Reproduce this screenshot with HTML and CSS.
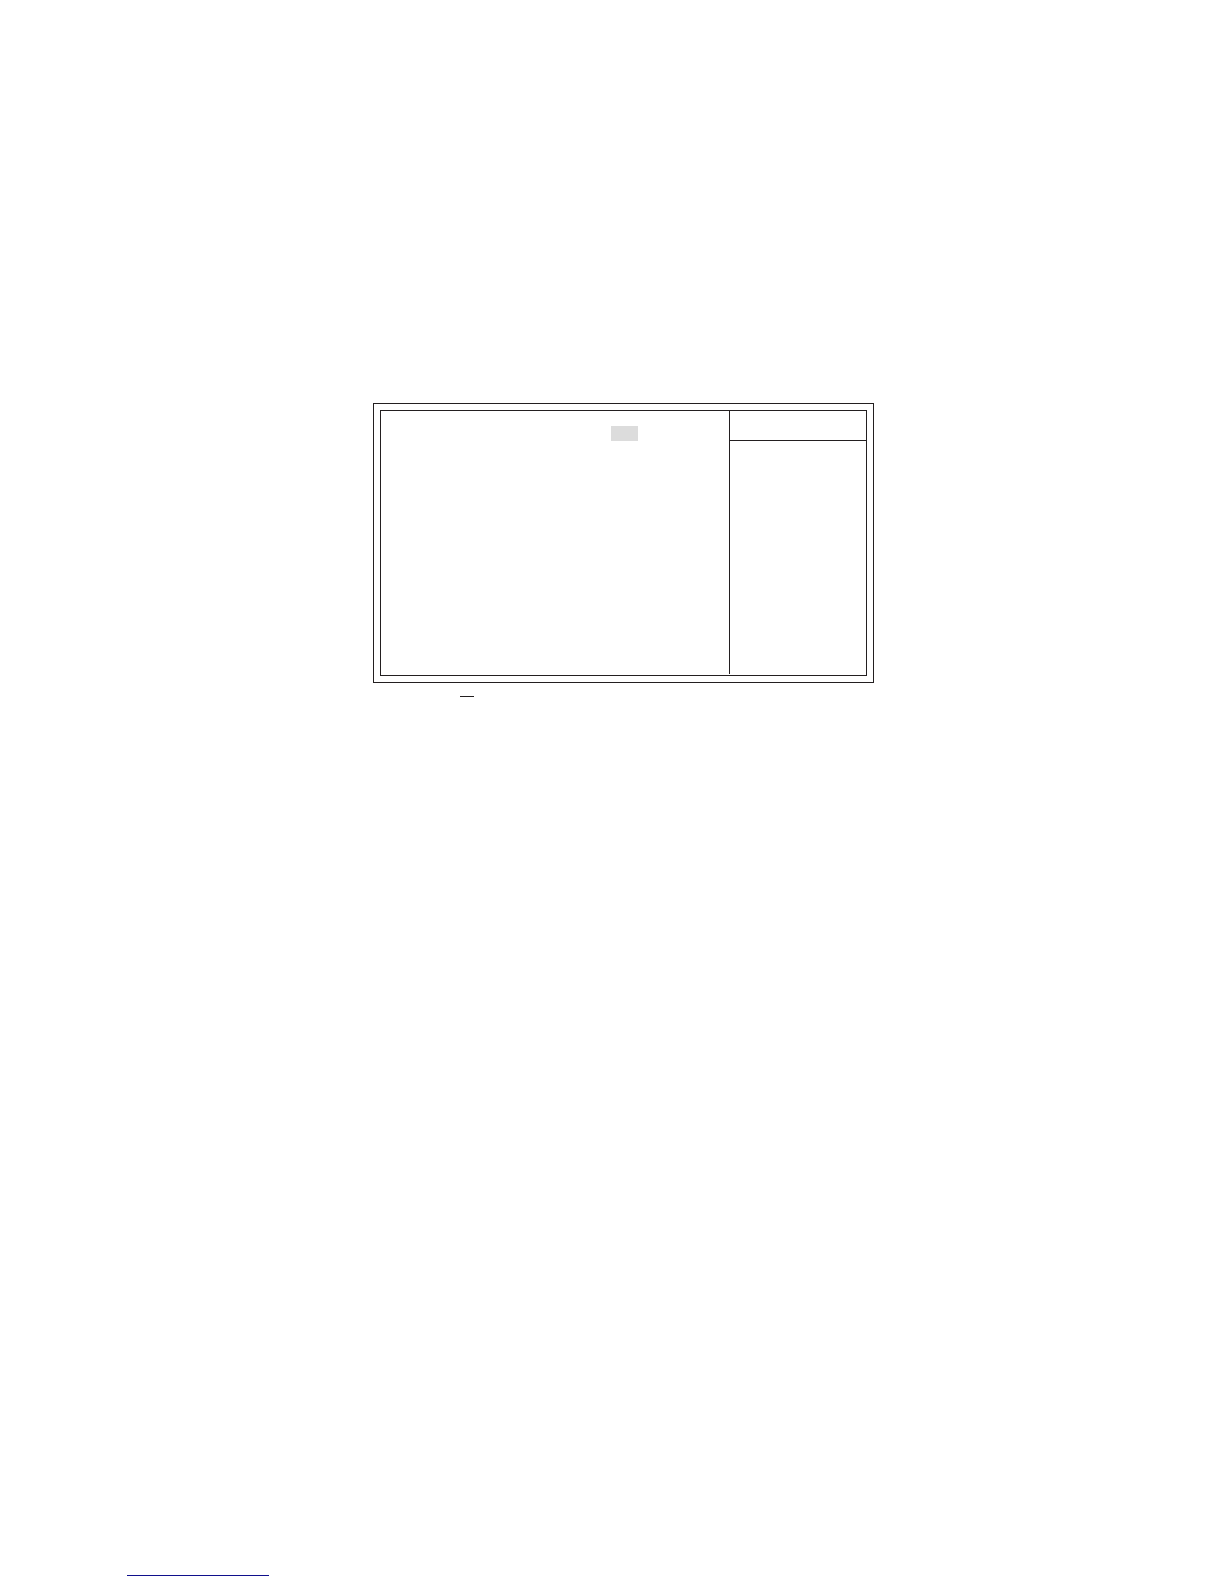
FILE: index.html
```html
<!DOCTYPE html>
<html lang="en">
<head>
    <meta charset="UTF-8">
    <meta name="viewport" content="width=device-width, initial-scale=1.0">
    <title>Setup Screen</title>
    <link rel="stylesheet" href="styles.css">
</head>
<body>
    <main class="container">
        <div class="frame">
            <div class="screen">
                <div class="options">
                    <div class="selected"></div>
                </div>
                <div class="help">
                    <div class="helpHeader"></div>
                </div>
            </div>
        </div>
        <div class="keyLine"></div>
    </main>
    <footer class="footer">
        <div class="footerLine"></div>
    </footer>
</body>
</html>
```

FILE: styles.css
```css
*{
    margin: 0px;
    box-sizing: border-box;
}
body{
    display: flex;
    flex-direction: column;
    min-height: 100vh;
    background-color: white;
}
.container{
    padding: 403px 350px 0px 373px;
}
.frame{
    border: solid #231f20 1px;
    padding: 6px;
}
.screen{
    display: flex;
    border: solid #231f20 1px;
    padding-bottom: 1px;
}
.options{
    display: flex;
    flex: 1;
    justify-content: flex-end;
    min-height: 263px;
    padding: 15px 91px 0px 0px;
}
.selected{
    width: 27px;
    height: 15px;
    background-color: #dcdcdc;
}
.help{
    width: 137px;
    border-left: solid #231f20 1px;
}
.helpHeader{
    height: 30px;
    border-bottom: solid #231f20 1px;
}
.keyLine{
    width: 14px;
    height: 1px;
    margin: 13px 0px 0px 87px;
    background-color: #231f20;
}
.footer{
    margin-top: auto;
    padding: 0px 127px 8px;
}
.footerLine{
    width: 142px;
    height: 1px;
    background-color: #10108c;
}
```
